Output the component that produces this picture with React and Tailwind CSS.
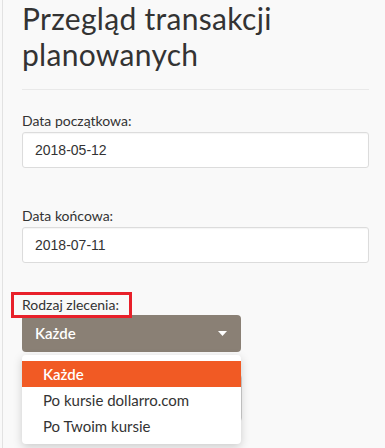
import { useState } from "react"

const options = ["Każde", "Po kursie dollarro.com", "Po Twoim kursie"]

function DateField({ label, value }) {
  return (
    <div className="flex flex-col">
      <label className="text-[14px] leading-[18px] text-[#333]">{label}</label>
      <div className="mt-[2px] h-[36px] rounded-[3px] border border-[#dcdcdc] bg-white px-[12px] flex items-center shadow-[inset_0_1px_1px_rgba(0,0,0,0.04)]">
        <span className="text-[14px] text-[#333] [font-family:'Liberation_Sans',Arial,sans-serif]">{value}</span>
      </div>
    </div>
  )
}

export default function App() {
  // the dropdown is drawn open, first option highlighted
  const [selected] = useState(0)

  return (
    <div className="w-[385px] h-[448px] overflow-hidden bg-[#f9f9f9] [font-family:Lato,'Noto_Sans',sans-serif]">
      <div className="ml-[2px] h-full border-l border-[#e2e2e2] pl-[19px] pr-[16px]">
        <h1 className="text-[30px] leading-[36px] tracking-[0.3px] text-[#333] font-normal">
          Przegląd transakcji
          <br />
          planowanych
        </h1>

        <div className="mt-[17px] border-t border-[#e9e9e9]" />

        <div className="mt-[22px] flex flex-col gap-[39px]">
          <DateField label="Data początkowa:" value="2018-05-12" />
          <DateField label="Data końcowa:" value="2018-07-11" />
        </div>

        <div className="mt-[29px] relative">
          <div className="relative z-10 -ml-[11px] w-fit border-[3px] border-[#e8202a] pl-[8px] pr-[10px] py-[1px]">
            <span className="block text-[14px] leading-[18px] text-[#333]">Rodzaj zlecenia:</span>
          </div>

          <div className="w-[219px] h-[37px] -mt-[3px] rounded-[4px] bg-[#8a8075] px-[13px] flex items-center justify-between">
            <span className="text-[15px] font-semibold text-white">{options[selected]}</span>
            <svg width="9" height="5" viewBox="0 0 9 5" className="mr-[1px]">
              <path d="M0 0h9L4.5 5z" fill="#fff" />
            </svg>
          </div>

          {/* field sitting behind the open list */}
          <div className="mt-[22px] w-[220px] h-[48px] rounded-[4px] border border-[#d0d0d0] bg-white" />

          <div className="absolute left-0 top-[63px] w-[219px] rounded-[4px] bg-white pt-[6px] pb-[5px] shadow-[0_3px_10px_rgba(0,0,0,0.18)]">
            {options.map((opt, i) => (
              <div
                key={opt}
                className={
                  i === selected
                    ? "h-[26px] flex items-center pl-[21px] bg-[#f15a24] text-white font-semibold text-[15px]"
                    : "h-[26px] flex items-center pl-[21px] text-[#333] text-[15px]"
                }
              >
                {opt}
              </div>
            ))}
          </div>
        </div>
      </div>
    </div>
  )
}
